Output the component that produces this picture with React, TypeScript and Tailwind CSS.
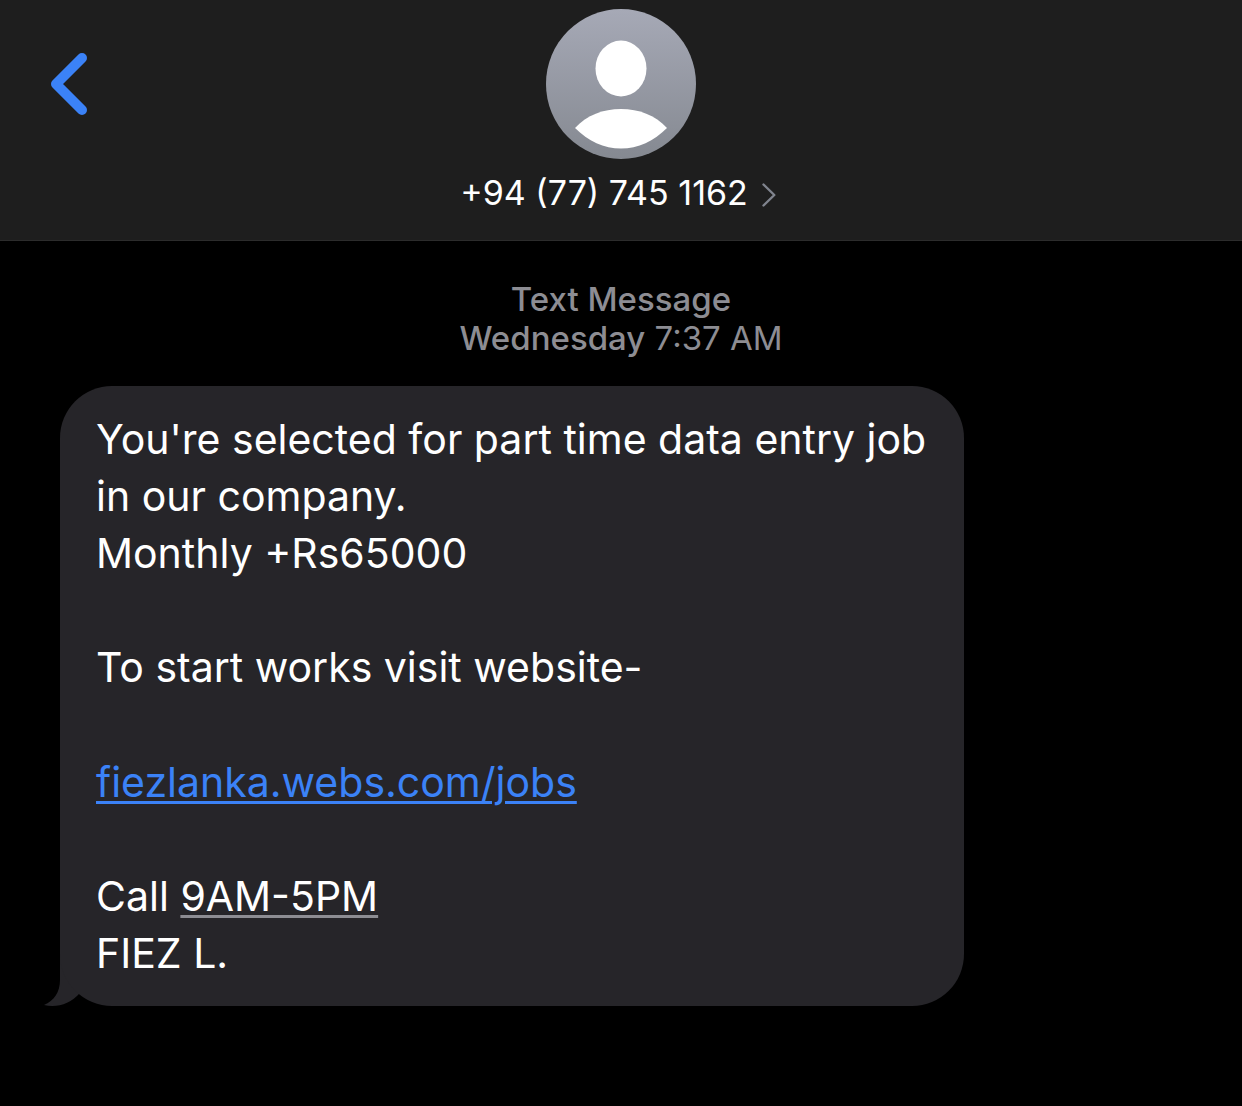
import React from 'react';

const BackIcon: React.FC = () => (
  <svg className="block h-[64px] w-[38px]" viewBox="0 0 38 64" fill="none" aria-hidden="true">
    <path d="M32 6 L6 32 L32 58" stroke="#3b82f7" strokeWidth="10" strokeLinecap="round" strokeLinejoin="round" />
  </svg>
);

const Avatar: React.FC = () => (
  <svg className="block size-[150px]" viewBox="0 0 150 150" aria-hidden="true">
    <defs>
      <linearGradient id="avatar-fill" x1="0" y1="0" x2="0" y2="1">
        <stop offset="0" stopColor="#a6a9b6" />
        <stop offset="1" stopColor="#858991" />
      </linearGradient>
    </defs>
    <circle cx="75" cy="75" r="75" fill="url(#avatar-fill)" />
    <ellipse cx="75" cy="59.5" rx="25.5" ry="28" fill="#fff" />
    <path d="M29 119 C41 106 57 100 75 100 C93 100 109 106 121 119 C108 132 92 139.5 75 139.5 C58 139.5 42 132 29 119Z" fill="#fff" />
  </svg>
);

const ChevronIcon: React.FC = () => (
  <svg className="mt-1 h-[24px] w-[14px]" viewBox="0 0 14 24" fill="none" aria-hidden="true">
    <path d="M1.5 1.5 L12.3 12 L1.5 22.5" stroke="#80848e" strokeWidth="2.4" strokeLinecap="round" strokeLinejoin="round" />
  </svg>
);

const BubbleTail: React.FC = () => (
  <svg className="absolute bottom-0 -left-[16px] h-[64px] w-[44px]" viewBox="0 0 44 64" aria-hidden="true">
    <path d="M16 0 V38 C16 50 10 59 0 63 C13 66 26 62 36 51 L44 0Z" fill="#262529" />
  </svg>
);

const App: React.FC = () => {
  return (
    <div className="min-h-screen bg-black font-[Inter,sans-serif] text-white">
      <header className="grid grid-cols-[1fr_auto_1fr] items-start border-b border-[#2c2c2c] bg-[#1e1e1e] pt-[9px] pb-[27px]">
        <button type="button" aria-label="Back" className="mt-[43px] ml-[50px] justify-self-start">
          <BackIcon />
        </button>
        <button type="button" className="flex flex-col items-center">
          <Avatar />
          <span className="mt-[14px] flex items-center gap-[14px] pr-[6px] text-[34px] leading-[40px]">
            +94 (77) 745 1162
            <ChevronIcon />
          </span>
        </button>
      </header>

      <main className="pt-[39px] pb-[100px]">
        <p className="text-center text-[33px] leading-[39px] text-[#8d8d93]">
          <span className="font-medium">Text Message</span>
          <br />
          <span className="font-medium">Wednesday</span> 7:37 AM
        </p>

        <div className="relative mt-7 ml-[60px] w-fit max-w-[904px]">
          <BubbleTail />
          <div className="relative rounded-[52px] bg-[#262529] px-9 pt-[25px] pb-[24px] text-[41px] leading-[57px]">
            <p>You're selected for part time data entry job in our company.</p>
            <p>Monthly +Rs65000</p>
            <p className="mt-[57px]">To start works visit website-</p>
            <p className="mt-[58px] mb-[57px]">
              <a href="#jobs" className="text-[#3b82f7] underline decoration-[3px] underline-offset-[4px]">fiezlanka.webs.com/jobs</a>
            </p>
            <p>
              Call <span className="underline decoration-[#8d8d93] decoration-[3px] underline-offset-[4px]">9AM-5PM</span>
            </p>
            <p>FIEZ L.</p>
          </div>
        </div>
      </main>
    </div>
  );
};

export default App;
